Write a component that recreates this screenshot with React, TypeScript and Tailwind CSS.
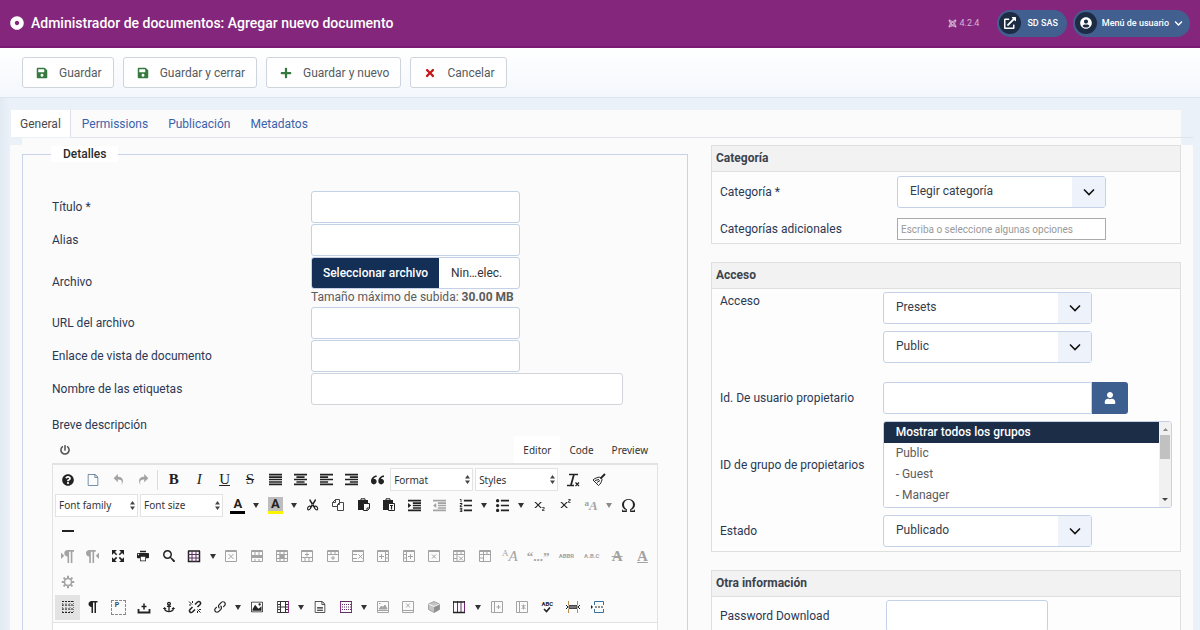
import React, { useState } from "react";
import type { ReactNode } from "react";
import {
  FaAnchor,
  FaChevronDown,
  FaDotCircle,
  FaExternalLinkAlt,
  FaJoomla,
  FaPlus,
  FaPowerOff,
  FaQuestionCircle,
  FaSave,
  FaTimes,
  FaUser,
  FaUserCircle,
} from "react-icons/fa";
import {
  ImEnlarge,
  ImFileEmpty,
  ImFileText2,
  ImImage,
  ImIndentDecrease,
  ImIndentIncrease,
  ImLink,
  ImList2,
  ImListNumbered,
  ImLtr,
  ImOmega,
  ImParagraphCenter,
  ImParagraphJustify,
  ImParagraphLeft,
  ImParagraphRight,
  ImPilcrow,
  ImPrinter,
  ImQuotesLeft,
  ImRedo2,
  ImRtl,
  ImScissors,
  ImSearch,
  ImSubscript,
  ImSuperscript,
  ImUndo2,
} from "react-icons/im";

/* ---------- Drawn glyphs for the editor ---------- */

function Glyph({ children }: { children: ReactNode }) {
  return (
    <svg width="14" height="14" viewBox="0 0 14 14" fill="none" stroke="currentColor" strokeWidth="1" aria-hidden="true">
      {children}
    </svg>
  );
}

const TableFrame = () => (
  <>
    <path d="M1.5 1.5h11v11h-11z" />
    <path d="M1 2.5h12" />
  </>
);

const icons = {
  copy: (
    <Glyph>
      <path d="M4.500 1.500h4v7h-7v-4zM4.500 1.500v3h-3" stroke="#444" />
      <path d="M8.500 4.500h4v8h-6v-6z" fill="#fbfbfb" stroke="#444" />
      <path d="M8.500 4.500v2h-2" stroke="#444" />
    </Glyph>
  ),
  paste: (
    <Glyph>
      <path d="M1 2h10v4H6v6H1z" fill="currentColor" stroke="none" />
      <path d="M4 2V.800h4V2" />
      <path d="M6.500 5.500h6v5l-2 2h-4z" fill="#fbfbfb" />
      <path d="M10 12.500V10h2.500" />
    </Glyph>
  ),
  pasteText: (
    <Glyph>
      <path d="M1 2h10v4H6v6H1z" fill="currentColor" stroke="none" />
      <path d="M4 2V.800h4V2" />
      <path d="M6.500 5.500h6v7h-6z" fill="#fbfbfb" />
      <path d="M8 7.500h3M9.500 7.500v4" strokeWidth="1.200" />
    </Glyph>
  ),
  removeFormat: (
    <Glyph>
      <path d="M3 1.500h9M1 12.500h7" strokeWidth="1.500" />
      <path d="M7.800 2L5 12" strokeWidth="1.800" />
      <path d="M9.500 9.500l3.500 3.500M13 9.500L9.500 13" strokeWidth="1.200" />
    </Glyph>
  ),
  broom: (
    <Glyph>
      <path d="M13 1L8.500 5.500" strokeWidth="1.800" />
      <path d="M10 6.500L7.500 4C5.500 4.500 3 5 1 7l5.500 5.500C8.500 11 9.500 9 10 6.500z" />
      <path d="M3 7.500l4-1M5 9.500l3-2" />
    </Glyph>
  ),
  hr: (
    <Glyph>
      <path d="M1 7h12" strokeWidth="2" />
    </Glyph>
  ),
  table: (
    <Glyph>
      <path d="M1 2h12M1.500 2v10.500h11V2" strokeWidth="1.500" />
      <path d="M1 5.500h12M1 9h12M5 2v11M9 2v11" stroke="#5b3060" />
    </Glyph>
  ),
  deleteTable: (
    <Glyph>
      <TableFrame />
      <path d="M4.500 5l5 5M9.500 5l-5 5" />
    </Glyph>
  ),
  rowProps: (
    <Glyph>
      <TableFrame />
      <path d="M1 7.500h12" strokeWidth="3" />
      <path d="M5 10v3M9 10v3M5 3v3M9 3v3" />
    </Glyph>
  ),
  cellProps: (
    <Glyph>
      <TableFrame />
      <path d="M1 5.500h12M1 9.500h12M5 2v11M9 2v11" />
      <path d="M5 5.500h4v4H5z" fill="currentColor" />
    </Glyph>
  ),
  rowBefore: (
    <Glyph>
      <TableFrame />
      <path d="M1 8.500h12M5 9v4M9 9v4M7 3.500v4M5 5.500h4" />
    </Glyph>
  ),
  rowAfter: (
    <Glyph>
      <TableFrame />
      <path d="M1 5.500h12M5 2v3.500M9 2v3.500M7 7v4M5 9h4" />
    </Glyph>
  ),
  deleteRow: (
    <Glyph>
      <TableFrame />
      <path d="M1 5.500h5M1 9.500h5M7.500 5.500l4 4M11.500 5.500l-4 4" />
    </Glyph>
  ),
  colBefore: (
    <Glyph>
      <TableFrame />
      <path d="M9.500 2v11M9.500 5.500h3M9.500 9h3M5.500 5v5M3 7.500h5" />
    </Glyph>
  ),
  colAfter: (
    <Glyph>
      <TableFrame />
      <path d="M4.500 2v11M1.500 5.500h3M1.500 9h3M8.500 5v5M6 7.500h5" />
    </Glyph>
  ),
  deleteCol: (
    <Glyph>
      <TableFrame />
      <path d="M5 5.500l4 4M9 5.500l-4 4" />
    </Glyph>
  ),
  splitCells: (
    <Glyph>
      <TableFrame />
      <path d="M1 5.500h12M5 3v3M9 3v3M1 9.500h4M5 6v7M7 7.500l4 4M11 7.500l-4 4" />
    </Glyph>
  ),
  mergeCells: (
    <Glyph>
      <TableFrame />
      <path d="M1 5.500h12M5.500 2v11M1 9h4.500M9 2v3.500" />
    </Glyph>
  ),
  visualAid: (
    <Glyph>
      <path d="M1.500 1v12M5 1v12M9 1v12M12.500 1v12" strokeDasharray="1 1" stroke="#777" />
      <path d="M1 1.500h12M1 5h12M1 9h12M1 12.500h12" strokeDasharray="2 1" />
    </Glyph>
  ),
  nonBreaking: (
    <Glyph>
      <path d="M1.500 9v3.500h11V9" strokeWidth="1.800" />
      <path d="M7 3.500v6M4.500 6.500h5" strokeWidth="1.500" />
    </Glyph>
  ),
  unlink: (
    <Glyph>
      <path d="M7 4.500l2.500-2.500c2-1.500 4 .8 2.500 2.500L9.500 7M7 9.500L4.500 12C2.500 13.500.5 11.200 2 9.500L4.500 7" strokeWidth="1.500" />
      <path d="M1 1.500l3 3M4.500 1v2M1 5h2M9.500 9.500l3 3M9.500 11v2M11 9.500h2" />
    </Glyph>
  ),
  template: (
    <Glyph>
      <path d="M1.500 1v12M12.500 1v12" stroke="#8c2f8a" />
      <path d="M1 1.500h12M1 12.500h12" stroke="#5b3060" />
      <path d="M3 4.500h9M3 7h9M3 9.500h9" strokeDasharray="1 1" stroke="#5b3060" />
    </Glyph>
  ),
  film: (
    <Glyph>
      <path d="M1 1.500h12M1 12.500h12M4.500 1v12M9.500 1v12M4.500 7h5" stroke="#333" />
      <path d="M1.500 1v12M12.500 1v12" stroke="#8c2f8a" />
      <path d="M2 4.500h2M2 7h2M2 9.500h2M10 4.500h2M10 7h2M10 9.500h2" stroke="#333" />
    </Glyph>
  ),
  greyImage: (
    <Glyph>
      <path d="M1.500 1.500h11v11h-11zM1 10.500h12" />
      <path d="M3 9l2.500-3L7 7.500 9 5l2 4z" fill="currentColor" />
      <path d="M3 3.500h1.500" />
    </Glyph>
  ),
  greyBox: (
    <Glyph>
      <path d="M1.500 1.500h11v11h-11zM1 10.500h12" />
      <path d="M5 3.500l4 4M9 3.500l-4 4" />
    </Glyph>
  ),
  cube: (
    <Glyph>
      <path d="M7 1.500l5.500 2.500v5.500L7 12.500 1.500 9.500V4z" fill="#c4c4c4" />
      <path d="M7 6.500v6l5.500-3V4z" fill="#8f8f8f" stroke="none" />
      <path d="M1.500 4L7 6.500 12.500 4" stroke="#f5f5f5" />
    </Glyph>
  ),
  columns: (
    <Glyph>
      <path d="M1.500 1v12M5.500 1v12M9 1v12M12.500 1v12" stroke="#6f2875" />
      <path d="M1 2h12M1 12.500h12" strokeWidth="1.400" />
    </Glyph>
  ),
  addCol: (
    <Glyph>
      <path d="M1.500 1.500h11v11h-11zM4.500 1v12M8.500 5v4M6.500 7h4" />
    </Glyph>
  ),
  removeCol: (
    <Glyph>
      <path d="M1.500 1.500h11v11h-11zM4.500 1v12M6.500 5l4 4M10.500 5l-4 4M8.500 4.500v5" />
    </Glyph>
  ),
  pageBreak: (
    <Glyph>
      <path d="M2.500 1v4M11.500 1v4M2.500 13V9M11.500 13V9" stroke="#b98a4a" />
      <path d="M3 5.500h8v3H3z" fill="#777" stroke="#444" />
      <path d="M0 5l2 2-2 2M14 5l-2 2 2 2" />
    </Glyph>
  ),
  readMore: (
    <Glyph>
      <path d="M3.500 5V1.500h9V5M3.500 9v3.500h9V9" stroke="#3b6f9c" />
      <path d="M4 7h9" strokeDasharray="2 1" />
      <path d="M0 5l2 2-2 2z" fill="currentColor" stroke="none" />
    </Glyph>
  ),
  gear: (
    <Glyph>
      <circle cx="7" cy="7" r="3.500" strokeWidth="1.500" />
      <path d="M7 .800v2.200M7 11v2.200M.800 7H3M11 7h2.200M2.600 2.600l1.600 1.600M9.800 9.800l1.600 1.600M11.400 2.600L9.800 4.200M4.200 9.800l-1.600 1.600" strokeWidth="2" />
    </Glyph>
  ),
};

/* ---------- Editor toolbar parts ---------- */

type ToolProps = {
  label: string;
  children: ReactNode;
  muted?: boolean;
  active?: boolean;
  wide?: boolean;
  menu?: boolean;
};

function Tool({ label, children, muted, active, wide, menu }: ToolProps) {
  const tone = muted ? "text-[#a3a3a3]" : "text-[#222]";
  const main = (
    <button
      type="button"
      aria-label={label}
      className={`flex h-[25px] items-center justify-center text-[13px] leading-none ${tone} ${
        wide ? "w-[31px]" : "w-[25px]"
      } ${active ? "bg-[#e3e3e3]" : ""}`}
    >
      {children}
    </button>
  );
  if (!menu) return main;
  return (
    <span className="flex">
      {main}
      <button
        type="button"
        aria-label={`${label}: opciones`}
        className={`flex w-3 items-center justify-center ${muted ? "text-[#8a8a8a]" : "text-[#333]"}`}
      >
        <svg width="6" height="5" viewBox="0 0 6 5" fill="currentColor" aria-hidden="true">
          <path d="M0 0h6L3 5z" />
        </svg>
      </button>
    </span>
  );
}

function ToolSelect({ label }: { label: string }) {
  return (
    <span className="relative">
      <select
        aria-label={label}
        className="h-[23px] w-[83px] appearance-none border border-[#e3e3e3] bg-white px-[3px] font-['Noto_Sans',sans-serif] text-[10px] text-[#333]"
      >
        <option>{label}</option>
      </select>
      <svg className="pointer-events-none absolute top-[7px] right-[3px]" width="5" height="9" viewBox="0 0 5 9" fill="#444" aria-hidden="true">
        <path d="M0 3.500h5L2.500 0zM0 5.500h5L2.500 9z" />
      </svg>
    </span>
  );
}

function SelectGroup({ labels }: { labels: string[] }) {
  return (
    <span className="flex gap-[2px] pr-[2px]">
      {labels.map((label) => (
        <ToolSelect key={label} label={label} />
      ))}
    </span>
  );
}

function Letter({ children, className }: { children: ReactNode; className: string }) {
  return <span className={`font-['Liberation_Serif',serif] leading-none ${className}`}>{children}</span>;
}

function EditorToolbar() {
  return (
    <div className="border-b border-[#e2e2e2] bg-[#fbfbfb] px-[2px] pt-[2px] pb-[2px]">
      <div role="toolbar" aria-label="Editor" className="flex h-[153px] flex-col justify-between">
        <div className="flex max-w-[556px] items-center justify-between">
          <Tool label="Ayuda"><FaQuestionCircle size={12} /></Tool>
          <Tool label="Nuevo documento"><span className="text-[#4d6f8f]"><ImFileEmpty size={12} /></span></Tool>
          <Tool label="Deshacer" muted><ImUndo2 size={11} /></Tool>
          <Tool label="Rehacer" muted><ImRedo2 size={11} /></Tool>
          <span className="flex w-1 justify-start"><span className="h-5 w-px bg-[#dcdcdc]" /></span>
          <Tool label="Negrita"><Letter className="text-[15px] font-bold">B</Letter></Tool>
          <Tool label="Cursiva"><Letter className="text-[15px] italic">I</Letter></Tool>
          <Tool label="Subrayado"><Letter className="text-[15px] underline">U</Letter></Tool>
          <Tool label="Tachado"><Letter className="text-[15px] line-through">S</Letter></Tool>
          <Tool label="Justificar"><ImParagraphJustify /></Tool>
          <Tool label="Centrar"><ImParagraphCenter /></Tool>
          <Tool label="Alinear a la izquierda"><ImParagraphLeft /></Tool>
          <Tool label="Alinear a la derecha"><ImParagraphRight /></Tool>
          <Tool label="Cita"><ImQuotesLeft /></Tool>
          <SelectGroup labels={["Format", "Styles"]} />
          <Tool label="Quitar formato">{icons.removeFormat}</Tool>
          <Tool label="Limpiar código">{icons.broom}</Tool>
        </div>

        <div className="flex max-w-[586px] items-center justify-between">
          <SelectGroup labels={["Font family", "Font size"]} />
          <Tool label="Color de texto" menu>
            <span className="w-[15px] border-b-[3px] border-black pb-px text-center font-[Roboto,sans-serif] text-[13px] leading-none font-bold">A</span>
          </Tool>
          <Tool label="Color de fondo" menu>
            <span className="w-[15px] border-b-[3px] border-[#fdf500] bg-[#bdbdbd] pb-px text-center font-[Roboto,sans-serif] text-[13px] leading-none font-bold">A</span>
          </Tool>
          <Tool label="Cortar"><ImScissors size={12} /></Tool>
          <Tool label="Copiar">{icons.copy}</Tool>
          <Tool label="Pegar">{icons.paste}</Tool>
          <Tool label="Pegar como texto">{icons.pasteText}</Tool>
          <Tool label="Aumentar sangría"><ImIndentIncrease /></Tool>
          <Tool label="Reducir sangría" muted><ImIndentDecrease /></Tool>
          <Tool label="Lista numerada" menu><ImListNumbered /></Tool>
          <Tool label="Lista" menu><ImList2 /></Tool>
          <Tool label="Subíndice"><ImSubscript size={12} /></Tool>
          <Tool label="Superíndice"><ImSuperscript size={12} /></Tool>
          <Tool label="Mayúsculas" muted menu>
            <Letter className="flex items-start text-[13px] font-bold"><span className="text-[9px] leading-none">a</span><em>A</em></Letter>
          </Tool>
          <Tool label="Caracteres especiales"><ImOmega /></Tool>
        </div>

        <div className="flex"><Tool label="Línea horizontal">{icons.hr}</Tool></div>

        <div className="flex max-w-[600px] items-center justify-between">
          <Tool label="Izquierda a derecha" muted><ImLtr /></Tool>
          <Tool label="Derecha a izquierda" muted><ImRtl /></Tool>
          <Tool label="Pantalla completa"><ImEnlarge size={12} /></Tool>
          <Tool label="Imprimir"><ImPrinter size={12} /></Tool>
          <Tool label="Buscar"><ImSearch size={12} /></Tool>
          <Tool label="Tabla" menu>{icons.table}</Tool>
          <Tool label="Eliminar tabla" muted>{icons.deleteTable}</Tool>
          <Tool label="Propiedades de fila" muted>{icons.rowProps}</Tool>
          <Tool label="Propiedades de celda" muted>{icons.cellProps}</Tool>
          <Tool label="Insertar fila antes" muted>{icons.rowBefore}</Tool>
          <Tool label="Insertar fila después" muted>{icons.rowAfter}</Tool>
          <Tool label="Eliminar fila" muted>{icons.deleteRow}</Tool>
          <Tool label="Insertar columna antes" muted>{icons.colBefore}</Tool>
          <Tool label="Insertar columna después" muted>{icons.colAfter}</Tool>
          <Tool label="Eliminar columna" muted>{icons.deleteCol}</Tool>
          <Tool label="Dividir celdas" muted>{icons.splitCells}</Tool>
          <Tool label="Combinar celdas" muted>{icons.mergeCells}</Tool>
          <Tool label="Estilo CSS" muted>
            <Letter className="flex items-start text-[15px]"><span className="text-[9px] leading-none">A</span><em>A</em></Letter>
          </Tool>
          <Tool label="Cita en línea" muted wide><Letter className="text-[13px] font-bold">“...”</Letter></Tool>
          <Tool label="Abreviatura" muted><span className="font-[Roboto,sans-serif] text-[6px] font-bold">ABBR</span></Tool>
          <Tool label="Acrónimo" muted><span className="font-[Roboto,sans-serif] text-[6px] font-bold">A.B.C</span></Tool>
          <Tool label="Texto eliminado" muted><Letter className="text-[15px] font-bold line-through">A</Letter></Tool>
          <Tool label="Texto insertado" muted><Letter className="text-[15px] font-bold underline">A</Letter></Tool>
        </div>

        <div className="flex"><Tool label="Atributos" muted>{icons.gear}</Tool></div>

        <div className="flex max-w-[556px] items-center justify-between">
          <Tool label="Guías visuales" active>{icons.visualAid}</Tool>
          <Tool label="Caracteres invisibles"><ImPilcrow size={12} /></Tool>
          <Tool label="Bloques">
            <span className="flex size-[15px] items-start border border-dashed border-[#888] pt-px pl-[3px] font-[Roboto,sans-serif] text-[7px] leading-none font-bold text-[#3b4a6b]">P</span>
          </Tool>
          <Tool label="Espacio duro">{icons.nonBreaking}</Tool>
          <Tool label="Ancla"><FaAnchor size={12} /></Tool>
          <Tool label="Quitar enlace">{icons.unlink}</Tool>
          <Tool label="Enlace" menu><ImLink size={12} /></Tool>
          <Tool label="Imagen"><ImImage size={12} /></Tool>
          <Tool label="Multimedia" menu>{icons.film}</Tool>
          <Tool label="Archivo"><ImFileText2 size={12} /></Tool>
          <Tool label="Plantilla" menu>{icons.template}</Tool>
          <Tool label="Pie de imagen" muted>{icons.greyImage}</Tool>
          <Tool label="Quitar pie" muted>{icons.greyBox}</Tool>
          <Tool label="Bloque" muted>{icons.cube}</Tool>
          <Tool label="Columnas" menu>{icons.columns}</Tool>
          <Tool label="Añadir columna" muted>{icons.addCol}</Tool>
          <Tool label="Quitar columna" muted>{icons.removeCol}</Tool>
          <Tool label="Ortografía">
            <span className="flex flex-col items-center font-[Roboto,sans-serif] text-[6px] leading-none font-bold">
              ABC
              <svg width="8" height="6" viewBox="0 0 8 6" fill="none" stroke="currentColor" strokeWidth="1.600" aria-hidden="true">
                <path d="M1 2l2.500 2.500L7 .5" />
              </svg>
            </span>
          </Tool>
          <Tool label="Salto de página">{icons.pageBreak}</Tool>
          <Tool label="Leer más">{icons.readMore}</Tool>
        </div>
      </div>
    </div>
  );
}

/* ---------- Form parts ---------- */

const boxClass = "h-8 rounded-[3px] border border-[#c5d1e8] bg-white px-3";

function FieldRow({ id, label, wide }: { id: string; label: string; wide?: boolean }) {
  return (
    <div className="flex items-center">
      <label htmlFor={id} className="w-[259px]">{label}</label>
      <input
        id={id}
        type="text"
        className={`h-8 rounded-[3px] border bg-white px-3 ${wide ? "w-[312px] border-[#d2d4d9]" : "w-[209px] border-[#c5d1e8]"}`}
      />
    </div>
  );
}

function SelectBox({ id, value, label }: { id: string; value: string; label?: string }) {
  return (
    <span className="relative block w-[209px]">
      <select id={id} aria-label={label} className={`${boxClass} w-full appearance-none pb-[2px] text-[#333d4a]`}>
        <option>{value}</option>
      </select>
      <span className="pointer-events-none absolute inset-y-px right-px flex w-[33px] items-center justify-center bg-[#eef2fb]">
        <svg width="12" height="8" viewBox="0 0 12 8" fill="none" stroke="#111" strokeWidth="1.600" aria-hidden="true">
          <path d="M1 1.500l5 5 5-5" />
        </svg>
      </span>
    </span>
  );
}

function Card({ title, children }: { title: string; children: ReactNode }) {
  return (
    <section className="border border-[#dfdfdf] bg-[#fdfdfd]">
      <h2 className="border-b border-[#dfdfdf] bg-[#f2f2f2] px-1 py-1 leading-[17px] font-bold text-[#3b434d]">{title}</h2>
      {children}
    </section>
  );
}

function ToolbarButton({ icon, children }: { icon: ReactNode; children: ReactNode }) {
  return (
    <button type="button" className="flex h-[31px] items-center gap-[10px] rounded-[3px] border border-[#ced4dc] bg-white pr-[11px] pl-3 text-[#555b61]">
      {icon}
      {children}
    </button>
  );
}

const tabs = ["General", "Permissions", "Publicación", "Metadatos"];
const groups = ["Mostrar todos los grupos", "Public", "- Guest", "- Manager"];

export default function App() {
  const [tab, setTab] = useState("General");
  const [file, setFile] = useState("Nin…elec.");

  return (
    <div className="min-h-screen bg-[#ebf0f8] bg-[linear-gradient(to_right,#e2eaf3,#ebf1f8_10px)] font-[Roboto,sans-serif] text-[12px] leading-4 text-[#2b3853]">
      <header className="flex h-12 items-center justify-between border-b-2 border-[#7a1a72] bg-[#84277c] pr-[10px] pl-[10px] text-white">
        <h1 className="flex items-center gap-[7px] text-[14px] leading-5 font-medium">
          <FaDotCircle size={14} />
          Administrador de documentos: Agregar nuevo documento
        </h1>
        <div className="flex items-center gap-[6px] text-[9px]">
          <span className="mr-3 flex items-center gap-[2px] text-[#d3b3d3]">
            <FaJoomla size={9} />
            4.2.4
          </span>
          <a href="#sitio" className="flex h-[27px] items-center gap-[6px] rounded-full bg-[#41608f] pr-[9px] pl-[2px] font-medium">
            <span className="flex size-[22px] items-center justify-center rounded-full bg-[#1d2b45]"><FaExternalLinkAlt size={12} /></span>
            SD SAS
          </a>
          <button type="button" className="flex h-[27px] items-center gap-[5px] rounded-full bg-[#41608f] pr-[7px] pl-[2px] font-medium">
            <span className="flex size-[22px] items-center justify-center rounded-full bg-[#1d2b45]"><FaUserCircle size={12} /></span>
            Menú de usuario
            <FaChevronDown size={9} />
          </button>
        </div>
      </header>

      <div className="flex h-[50px] items-center gap-[9px] border-b border-[#dce5ef] bg-linear-to-b from-white to-[#f4f7fc] px-[22px]">
        <ToolbarButton icon={<FaSave size={12} className="mx-[1px] text-[#35793f]" />}>Guardar</ToolbarButton>
        <ToolbarButton icon={<FaSave size={12} className="mx-[1px] text-[#35793f]" />}>Guardar y cerrar</ToolbarButton>
        <ToolbarButton icon={<FaPlus size={12} className="mx-[1px] text-[#35793f]" />}>Guardar y nuevo</ToolbarButton>
        <ToolbarButton icon={<FaTimes size={12} className="mx-[1px] text-[#c81717]" />}>Cancelar</ToolbarButton>
      </div>

      <main className="pt-3">
        <div className="mr-[19px] ml-[11px] bg-[#fbfbfb]">
          <div role="tablist" className="flex h-[27px] gap-[2px]">
            {tabs.map((name) => (
              <button
                key={name}
                type="button"
                role="tab"
                aria-selected={tab === name}
                onClick={() => setTab(name)}
                className={`px-[9px] ${tab === name ? "border-r border-[#dde1e6] bg-white text-[#4a4a4a]" : "text-[#3a62ab]"}`}
              >
                {name}
              </button>
            ))}
          </div>
        </div>
        <div className="mr-[7px] ml-[70px] h-px bg-[#dfe2e6]" />
        <div className="mr-[19px] ml-[22px] h-[7px] bg-[#fbfbfb]" />

        <div className="mr-[7px] ml-[10px] grid grid-cols-[minmax(0,666fr)_minmax(0,470fr)] gap-[23px] bg-[#fbfbfb] px-3">
          <fieldset className="mt-px min-w-0 border border-[#c9d3e8] px-[29px]">
            <legend className="-ml-[1px] bg-white px-3 font-medium text-[#2b2b2b]">Detalles</legend>
            <div className="flex flex-col gap-px pt-[29px]">
              <FieldRow id="titulo" label="Título *" />
              <FieldRow id="alias" label="Alias" />
              <div className="flex items-center">
                <label htmlFor="archivo" className="w-[259px]">Archivo</label>
                <div>
                  <label className="flex w-[209px] cursor-pointer items-stretch overflow-hidden rounded-[3px] border border-[#c5d1e8] bg-white">
                    <span className="flex h-[30px] w-[127px] items-center justify-center bg-[#132f56] font-medium text-white">Seleccionar archivo</span>
                    <span className="flex items-center pl-3 text-[#333]">{file}</span>
                    <input
                      id="archivo"
                      type="file"
                      className="sr-only"
                      onChange={(event) => setFile(event.target.files?.[0]?.name ?? "Nin…elec.")}
                    />
                  </label>
                  <p className="h-[17px] text-[#5c5c5c]">Tamaño máximo de subida: <strong>30.00 MB</strong></p>
                </div>
              </div>
              <FieldRow id="url" label="URL del archivo" />
              <FieldRow id="enlace" label="Enlace de vista de documento" />
              <FieldRow id="etiquetas" label="Nombre de las etiquetas" wide />
            </div>

            <label htmlFor="descripcion" className="mt-3 block">Breve descripción</label>
            <div className="mt-[3px] flex h-[27px] items-stretch justify-between">
              <button type="button" aria-label="Activar editor" className="px-2 text-[#555]"><FaPowerOff size={10} /></button>
              <div role="tablist" className="flex pr-px font-['Noto_Sans',sans-serif] text-[10px] text-[#333]">
                <button type="button" role="tab" aria-selected="true" className="bg-white px-[9px]">Editor</button>
                <button type="button" role="tab" aria-selected="false" className="px-[9px]">Code</button>
                <button type="button" role="tab" aria-selected="false" className="px-[9px]">Preview</button>
              </div>
            </div>
            <div className="border border-t-2 border-[#e2e2e2] bg-white">
              <EditorToolbar />
              <textarea id="descripcion" className="block h-16 w-full resize-none bg-white" />
            </div>
          </fieldset>

          <div className="flex flex-col gap-[18px]">
            <Card title="Categoría">
              <div className="flex flex-col gap-[10px] px-2 pt-1 pb-[3px]">
                <div className="flex items-center">
                  <label htmlFor="categoria" className="w-[177px]">Categoría *</label>
                  <SelectBox id="categoria" value="Elegir categoría" />
                </div>
                <div className="flex items-center">
                  <label htmlFor="adicionales" className="w-[177px]">Categorías adicionales</label>
                  <input
                    id="adicionales"
                    type="text"
                    placeholder="Escriba o seleccione algunas opciones"
                    className="h-[22px] w-[209px] border border-[#aaa] bg-white px-[3px] text-[10px] placeholder:text-[#999]"
                  />
                </div>
              </div>
            </Card>

            <Card title="Acceso">
              <div className="flex flex-col gap-[7px] px-2 pt-[3px] pb-1">
                <div className="flex items-start">
                  <label htmlFor="acceso" className="w-[163px] pt-px">Acceso</label>
                  <div className="flex flex-col gap-[7px] pb-3">
                    <SelectBox id="acceso" value="Presets" />
                    <SelectBox id="nivel" label="Nivel de acceso" value="Public" />
                  </div>
                </div>
                <div className="flex items-center">
                  <label htmlFor="propietario" className="w-[163px]">Id. De usuario propietario</label>
                  <input id="propietario" type="text" className="h-8 w-[209px] rounded-l-[3px] border border-[#c5d1e8] bg-white px-3" />
                  <button type="button" aria-label="Seleccionar usuario" className="flex h-8 w-9 items-center justify-center rounded-r-[3px] bg-[#3d5f90] text-white">
                    <FaUser size={12} />
                  </button>
                </div>
                <div className="flex items-center">
                  <label htmlFor="grupos" className="w-[163px]">ID de grupo de propietarios</label>
                  <div className="flex h-[87px] w-[290px] overflow-hidden rounded-[3px] border border-[#c5d1e8] bg-white">
                    <select
                      id="grupos"
                      multiple
                      size={4}
                      defaultValue={[groups[0]]}
                      className="h-full min-w-0 flex-1 overflow-hidden bg-white text-[#5c5c5c]"
                    >
                      {groups.map((group) => (
                        <option
                          key={group}
                          value={group}
                          className="h-[21px] px-3 pt-[3px] pb-0 checked:bg-linear-to-r checked:from-[#1c2d47] checked:to-[#1c2d47] checked:font-medium checked:[-webkit-text-fill-color:#fff]"
                        >
                          {group}
                        </option>
                      ))}
                    </select>
                    <span aria-hidden="true" className="flex w-3 flex-col items-center bg-[#f1f1f1] py-[6px]">
                      <svg width="5" height="3" viewBox="0 0 5 3" fill="#8a8a8a"><path d="M0 3h5L2.500 0z" /></svg>
                      <span className="mt-1 h-6 w-[10px] bg-[#c1c1c1]" />
                      <svg className="mt-auto" width="6" height="3" viewBox="0 0 6 3" fill="#444"><path d="M0 0h6L3 3z" /></svg>
                    </span>
                  </div>
                </div>
                <div className="flex items-center">
                  <label htmlFor="estado" className="w-[163px]">Estado</label>
                  <SelectBox id="estado" value="Publicado" />
                </div>
              </div>
            </Card>

            <Card title="Otra información">
              <div className="flex items-center px-2 pt-[3px] pb-1">
                <label htmlFor="password" className="w-[166px]">Password Download</label>
                <input id="password" type="password" className="h-8 w-[162px] rounded-[3px] border border-[#c5d1e8] bg-white px-3" />
              </div>
            </Card>
          </div>
        </div>
      </main>
    </div>
  );
}
